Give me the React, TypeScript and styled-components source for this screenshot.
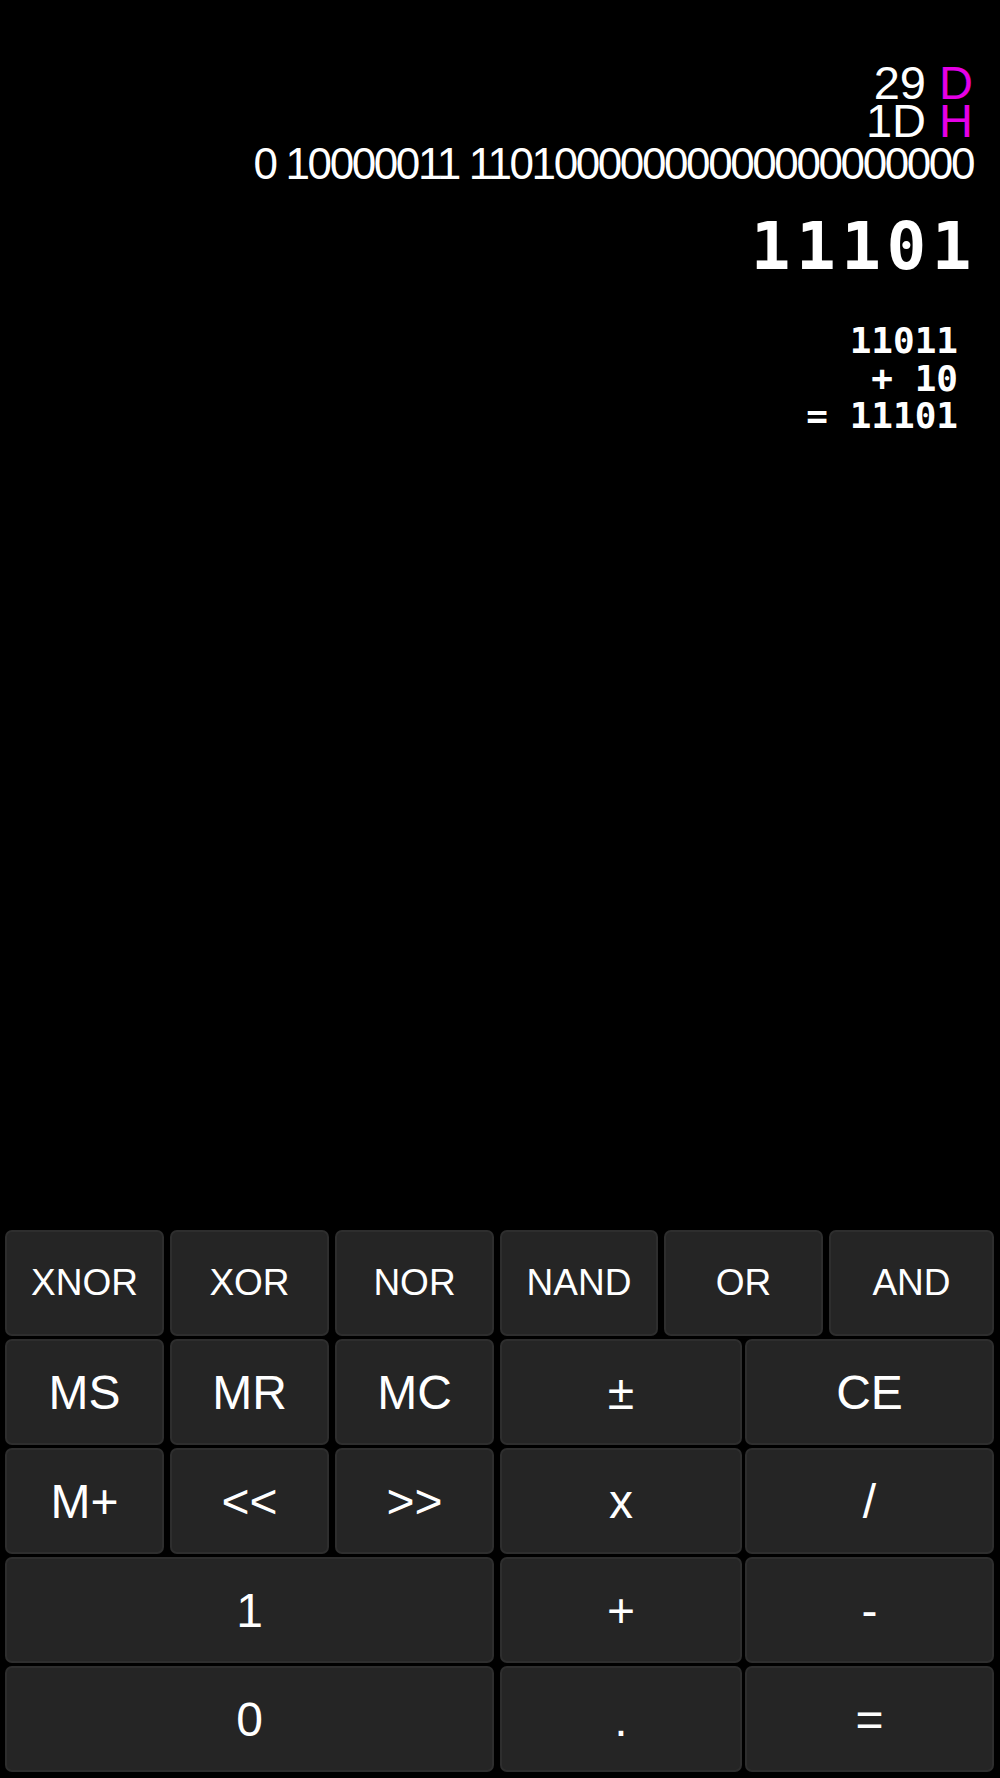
import styled, { createGlobalStyle } from "styled-components";

const GlobalStyle = createGlobalStyle`
  html, body {
    margin: 0;
    padding: 0;
    background: #000000;
  }
  body {
    font-family: "Liberation Sans", Arial, sans-serif;
    color: #ffffff;
  }
`;

type KeyDef = { label: string; small?: boolean };

const Screen = styled.div`
  width: 1000px;
  height: 1778px;
  display: flex;
  flex-direction: column;
  justify-content: space-between;
  background: #000000;
  box-sizing: border-box;
`;

const Display = styled.div`
  display: flex;
  flex-direction: column;
  align-items: flex-end;
  padding: 64px 27px 0 0;
`;

const BaseLine = styled.div`
  font-family: "Liberation Sans", Arial, sans-serif;
  font-size: 47px;
  line-height: 38px;
  height: 38px;
  white-space: pre;
  color: #ffffff;
`;

const Suffix = styled.span`
  color: #e600e6;
`;

const BitLine = styled.div`
  margin-top: 4px;
  font-family: "Liberation Sans", Arial, sans-serif;
  font-size: 44px;
  line-height: 40px;
  letter-spacing: -2.4px;
  white-space: pre;
`;

const Result = styled.div`
  margin-top: 30px;
  margin-right: -4px;
  font-family: "DejaVu Sans Mono", monospace;
  font-weight: bold;
  font-size: 66px;
  line-height: 66px;
  letter-spacing: 5.5px;
`;

const Expression = styled.div`
  margin-top: 42px;
  margin-right: 15px;
  font-family: "DejaVu Sans Mono", monospace;
  font-weight: bold;
  font-size: 36px;
  line-height: 37.5px;
  text-align: right;
  white-space: pre;
`;

const Keypad = styled.div`
  display: flex;
  flex-direction: column;
  gap: 3px;
  padding: 0 6px 6px 5px;
`;

const KeyRow = styled.div`
  display: flex;
  gap: 6px;
  height: 106px;
`;

const LeftGroup = styled.div<{ $cols: number }>`
  width: 489px;
  display: grid;
  grid-template-columns: ${(p) => (p.$cols === 3 ? "1fr 1fr 1fr" : "1fr")};
  gap: 6px;
`;

const RightGroup = styled.div<{ $logic?: boolean }>`
  flex: 1;
  display: grid;
  grid-template-columns: ${(p) => (p.$logic ? "158px 159px 1fr" : "242px 1fr")};
  gap: ${(p) => (p.$logic ? "6px" : "3px")};
`;

const Key = styled.button<{ $small?: boolean }>`
  display: flex;
  align-items: center;
  justify-content: center;
  margin: 0;
  padding: 0;
  background: #252525;
  border: 2px solid #2e2e2e;
  border-radius: 7px;
  color: #ffffff;
  font-family: "Liberation Sans", Arial, sans-serif;
  font-size: ${(p) => (p.$small ? "37px" : "48px")};
  cursor: pointer;
`;

const logicKeys = ["XNOR", "XOR", "NOR", "NAND", "OR", "AND"];

const rows: { left: string[]; right: string[] }[] = [
  { left: ["MS", "MR", "MC"], right: ["±", "CE"] },
  { left: ["M+", "<<", ">>"], right: ["x", "/"] },
  { left: ["1"], right: ["+", "-"] },
  { left: ["0"], right: [".", "="] },
];

const renderKey = (k: KeyDef) => (
  <Key key={k.label} $small={k.small}>
    {k.label}
  </Key>
);

export default function App() {
  return (
    <>
      <GlobalStyle />
      <Screen>
        <Display>
          <BaseLine>
            29 <Suffix>D</Suffix>
          </BaseLine>
          <BaseLine>
            1D <Suffix>H</Suffix>
          </BaseLine>
          <BitLine>0 10000011 11010000000000000000000</BitLine>
          <Result>11101</Result>
          <Expression>
            {"11011\n+ 10\n= 11101"}
          </Expression>
        </Display>

        <Keypad>
          <KeyRow>
            <LeftGroup $cols={3}>
              {logicKeys.slice(0, 3).map((l) => renderKey({ label: l, small: true }))}
            </LeftGroup>
            <RightGroup $logic>
              {logicKeys.slice(3).map((l) => renderKey({ label: l, small: true }))}
            </RightGroup>
          </KeyRow>
          {rows.map((r, i) => (
            <KeyRow key={i}>
              <LeftGroup $cols={r.left.length}>
                {r.left.map((l) => renderKey({ label: l }))}
              </LeftGroup>
              <RightGroup>{r.right.map((l) => renderKey({ label: l }))}</RightGroup>
            </KeyRow>
          ))}
        </Keypad>
      </Screen>
    </>
  );
}
